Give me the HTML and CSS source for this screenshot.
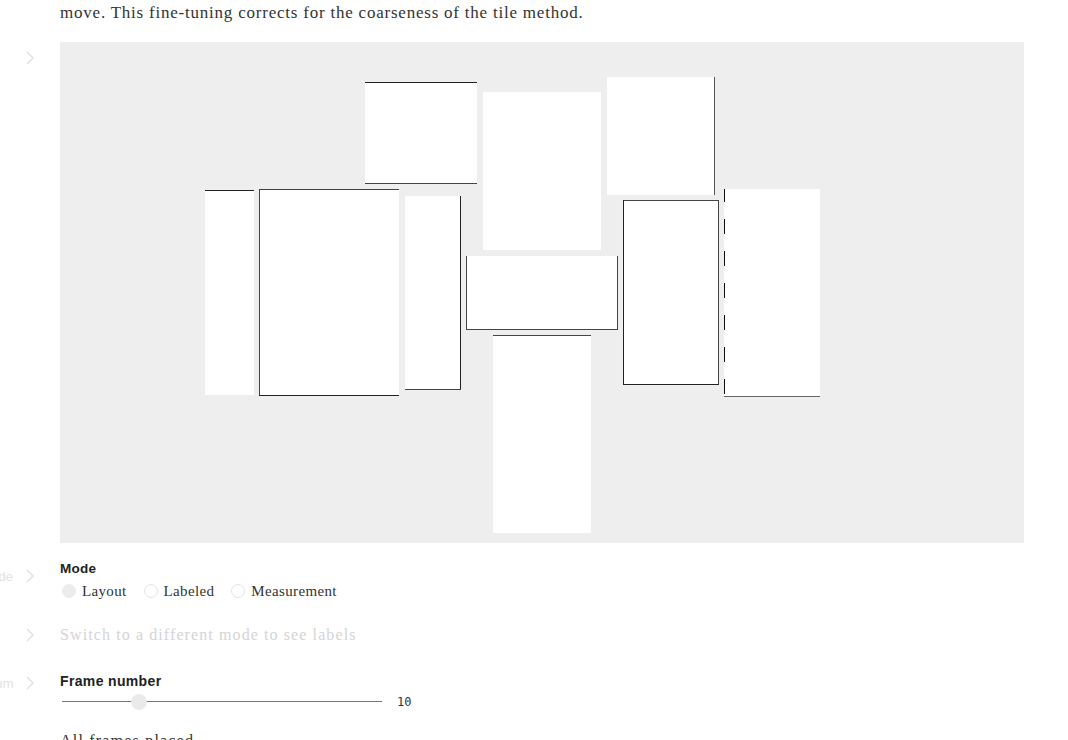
FILE: index.html
```html
<!DOCTYPE html>
<html>
<head>
<meta charset="utf-8">
<link rel="stylesheet" href="styles.css">
</head>
<body>
<div class="page">
  <div class="cell cell-text">
    <div class="gutter"></div>
    <p class="prose">move. This fine-tuning corrects for the coarseness of the tile method.</p>
  </div>

  <div class="cell cell-panel">
    <div class="gutter"><svg class="chev" width="8" height="14" viewBox="0 0 8 14"><polyline points="1,1 7,7 1,13" fill="none" stroke="#e2e2e2" stroke-width="1.5"/></svg></div>
    <div class="panel">
      <svg class="canvas" width="964" height="501" viewBox="0 0 964 501">
        <g fill="#fff">
          <rect x="145" y="148" width="49" height="205"/>
          <rect x="199" y="147" width="140" height="207"/>
          <rect x="345" y="154" width="56" height="194"/>
          <rect x="305" y="40" width="112" height="102"/>
          <rect x="423" y="50" width="118" height="158"/>
          <rect x="406" y="214" width="152" height="74"/>
          <rect x="433" y="293" width="98" height="198"/>
          <rect x="547" y="35" width="108" height="118"/>
          <rect x="563" y="158" width="96" height="185"/>
          <rect x="664" y="147" width="96" height="208"/>
        </g>
        <g fill="none" stroke-width="1">
          <line x1="145" y1="148.5" x2="194" y2="148.5" stroke="#222"/>
          <line x1="199.5" y1="147" x2="199.5" y2="354" stroke="#444"/>
          <line x1="199" y1="147.5" x2="339" y2="147.5" stroke="#444"/>
          <line x1="199" y1="353.5" x2="339" y2="353.5" stroke="#222"/>
          <line x1="400.5" y1="154" x2="400.5" y2="348" stroke="#222"/>
          <line x1="345" y1="347.5" x2="401" y2="347.5" stroke="#444"/>
          <line x1="305" y1="40.5" x2="417" y2="40.5" stroke="#222"/>
          <line x1="305" y1="141.5" x2="417" y2="141.5" stroke="#444"/>
          <line x1="406.5" y1="214" x2="406.5" y2="288" stroke="#444"/>
          <line x1="557.5" y1="214" x2="557.5" y2="288" stroke="#444"/>
          <line x1="406" y1="287.5" x2="558" y2="287.5" stroke="#444"/>
          <line x1="433" y1="293.5" x2="531" y2="293.5" stroke="#444"/>
          <line x1="654.5" y1="35" x2="654.5" y2="153" stroke="#555"/>
          <line x1="563" y1="158.5" x2="659" y2="158.5" stroke="#444"/>
          <line x1="563.5" y1="158" x2="563.5" y2="343" stroke="#222"/>
          <line x1="658.5" y1="158" x2="658.5" y2="343" stroke="#444"/>
          <line x1="563" y1="342.5" x2="659" y2="342.5" stroke="#222"/>
          <line x1="664.5" y1="147" x2="664.5" y2="355" stroke="#111" stroke-dasharray="15 17" stroke-dashoffset="2"/>
          <line x1="664" y1="354.5" x2="760" y2="354.5" stroke="#666"/>
        </g>
      </svg>
    </div>
  </div>

  <div class="cell cell-mode">
    <div class="gutter"><span class="name">mode</span><svg class="chev" width="8" height="14" viewBox="0 0 8 14"><polyline points="1,1 7,7 1,13" fill="none" stroke="#e2e2e2" stroke-width="1.5"/></svg></div>
    <div class="control">
      <div class="label">Mode</div>
      <div class="radios">
        <label class="radio"><span class="dot dot-on"></span>Layout</label>
        <label class="radio"><span class="dot"></span>Labeled</label>
        <label class="radio"><span class="dot"></span>Measurement</label>
      </div>
    </div>
  </div>

  <div class="cell cell-note">
    <div class="gutter"><svg class="chev" width="8" height="14" viewBox="0 0 8 14"><polyline points="1,1 7,7 1,13" fill="none" stroke="#e2e2e2" stroke-width="1.5"/></svg></div>
    <p class="note">Switch to a different mode to see labels</p>
  </div>

  <div class="cell cell-frame">
    <div class="gutter"><span class="name name-tight">frameNum</span><svg class="chev" width="8" height="14" viewBox="0 0 8 14"><polyline points="1,1 7,7 1,13" fill="none" stroke="#e2e2e2" stroke-width="1.5"/></svg></div>
    <div class="control">
      <div class="label">Frame number</div>
      <div class="slider-row">
        <div class="slider"><div class="track"></div><div class="thumb"></div></div>
        <span class="value">10</span>
      </div>
    </div>
  </div>

  <div class="cell cell-last">
    <div class="gutter"></div>
    <p class="status">All frames placed</p>
  </div>
</div>
</body>
</html>
```

FILE: styles.css
```css
html, body {
  margin: 0;
  padding: 0;
  background: #fff;
  overflow: hidden;
}
.page {
  width: 1068px;
  height: 740px;
  overflow: hidden;
}
.cell {
  display: flex;
  align-items: flex-start;
}
.gutter {
  width: 60px;
  flex: none;
  display: flex;
  justify-content: flex-end;
  align-items: center;
  overflow: hidden;
  white-space: nowrap;
  padding-right: 26px;
  box-sizing: border-box;
  font-family: "Liberation Sans", sans-serif;
  font-size: 13px;
  color: #e2e2e2;
  height: 20px;
}
.gutter .name {
  margin-right: 13px;
}
.gutter .name-tight {
  margin-right: 12px;
  letter-spacing: 0.4px;
}
.chev {
  display: block;
  flex: none;
}
.prose {
  margin: 0;
  padding-top: 1px;
  font-family: "Liberation Serif", serif;
  font-size: 17px;
  line-height: 24px;
  letter-spacing: 0.78px;
  color: #333;
}
.cell-panel {
  margin-top: 17px;
}
.cell-panel .gutter {
  margin-top: 6px;
}
.panel {
  width: 964px;
  height: 501px;
  background: #eeeeee;
}
.canvas {
  display: block;
}
.cell-mode {
  margin-top: 18px;
}
.cell-mode .gutter {
  margin-top: 5px;
}
.label {
  font-family: "Liberation Sans", sans-serif;
  font-weight: bold;
  font-size: 13.5px;
  line-height: 16px;
  letter-spacing: 0.25px;
  color: #222;
}
.cell-frame .label {
  font-size: 14px;
  letter-spacing: 0.35px;
}
.radios {
  display: flex;
  gap: 15px;
  margin-top: 5px;
  font-family: "Liberation Serif", serif;
  font-size: 15px;
  line-height: 18px;
  letter-spacing: 0.35px;
  color: #333;
}
.radio {
  display: flex;
  align-items: center;
}
.dot {
  width: 14px;
  height: 14px;
  border-radius: 50%;
  border: 1px solid #e4e4e4;
  box-sizing: border-box;
  margin: 0 6px 0 2px;
  background: #fff;
}
.dot-on {
  background: #ececec;
  border-color: #ececec;
}
.cell-note {
  margin-top: 25px;
}
.note {
  margin: 0;
  font-family: "Liberation Serif", serif;
  font-size: 16px;
  line-height: 20px;
  color: #d4d4d4;
  letter-spacing: 1.1px;
}
.cell-frame {
  margin-top: 28px;
}
.slider-row {
  display: flex;
  align-items: center;
  margin-top: 4px;
}
.slider {
  position: relative;
  width: 320px;
  height: 18px;
  margin-left: 2px;
}
.track {
  position: absolute;
  left: 0;
  right: 0;
  top: 8px;
  height: 1px;
  background: #777;
}
.thumb {
  position: absolute;
  left: 69px;
  top: 1px;
  width: 16px;
  height: 16px;
  border-radius: 50%;
  background: #eaeaea;
}
.value {
  margin-left: 15px;
  font-family: "DejaVu Sans Mono", monospace;
  font-size: 12px;
  color: #333;
}
.cell-last {
  margin-top: 20px;
}
.status {
  margin: 0;
  font-family: "Liberation Serif", serif;
  font-size: 16px;
  line-height: 20px;
  color: #333;
  letter-spacing: 1.2px;
}
```
